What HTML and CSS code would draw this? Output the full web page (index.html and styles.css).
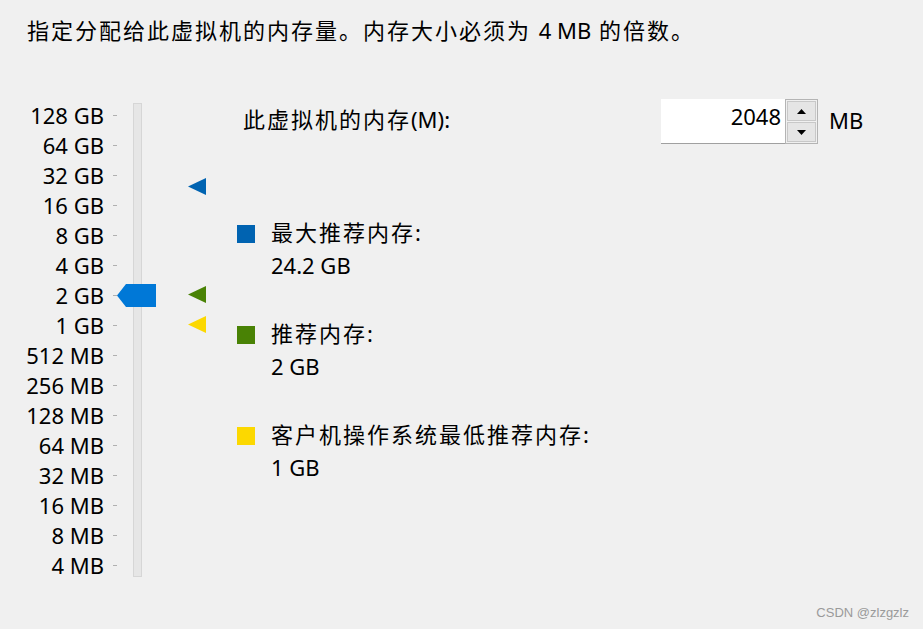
FILE: index.html
```html
<!DOCTYPE html>
<html lang="zh-CN">
<head>
<meta charset="utf-8">
<link rel="stylesheet" href="styles.css">
</head>
<body>
<div class="page">
  <p class="intro cj">指定分配给此虚拟机的内存量。内存大小必须为 <span class="lat">4 MB</span> 的倍数。</p>
  <div class="main">
    <div class="scale">
      <ul class="labels">
        <li>128 GB</li><li>64 GB</li><li>32 GB</li><li>16 GB</li><li>8 GB</li><li>4 GB</li><li>2 GB</li><li>1 GB</li>
        <li>512 MB</li><li>256 MB</li><li>128 MB</li><li>64 MB</li><li>32 MB</li><li>16 MB</li><li>8 MB</li><li>4 MB</li>
      </ul>
      <div class="slider">
        <div class="track"></div>
        <svg class="thumb" width="39" height="23" viewBox="0 0 39 23"><polygon points="0,11.5 9,0 39,0 39,23 9,23" fill="#0078d7"/></svg>
      </div>
      <div class="markers">
        <svg class="mark mark-max" width="18" height="17" viewBox="0 0 18 17"><polygon points="0,8.5 18,0 18,17" fill="#0063b1"/></svg>
        <svg class="mark mark-rec" width="18" height="17" viewBox="0 0 18 17"><polygon points="0,8.5 18,0 18,17" fill="#498205"/></svg>
        <svg class="mark mark-min" width="18" height="17" viewBox="0 0 18 17"><polygon points="0,8.5 18,0 18,17" fill="#fcd800"/></svg>
      </div>
    </div>
    <div class="info">
      <div class="mem-row">
        <span class="mem-label cj">此虚拟机的内存<span class="lat">(M):</span></span>
        <div class="spin">
          <div class="spin-value">2048</div>
          <div class="spin-btns">
            <div class="spin-btn"><svg width="9" height="5" viewBox="0 0 9 5"><polygon points="0,5 4.5,0 9,5" fill="#000"/></svg></div>
            <div class="spin-btn"><svg width="9" height="5" viewBox="0 0 9 5"><polygon points="0,0 9,0 4.5,5" fill="#000"/></svg></div>
          </div>
        </div>
        <span class="unit">MB</span>
      </div>
      <div class="legend">
        <div class="item">
          <span class="swatch blue"></span>
          <div class="item-text"><div class="cj">最大推荐内存<span class="lat">:</span></div><div>24.2 GB</div></div>
        </div>
        <div class="item">
          <span class="swatch green"></span>
          <div class="item-text"><div class="cj">推荐内存<span class="lat">:</span></div><div>2 GB</div></div>
        </div>
        <div class="item">
          <span class="swatch yellow"></span>
          <div class="item-text"><div class="cj">客户机操作系统最低推荐内存<span class="lat">:</span></div><div>1 GB</div></div>
        </div>
      </div>
    </div>
  </div>
  <div class="watermark">CSDN @zlzgzlz</div>
</div>
</body>
</html>
```
FILE: styles.css
```css
html, body {
  margin: 0;
  padding: 0;
  background: #f0f0f0;
}
.page {
  width: 923px;
  height: 629px;
  position: relative;
  font-family: "Noto Sans", "Noto Sans CJK SC", sans-serif;
  font-size: 22px;
  color: #000;
  overflow: hidden;
}
.cj {
  letter-spacing: 2px;
}
.lat {
  letter-spacing: 0;
}
.intro {
  margin: 0;
  padding: 17px 0 0 27px;
  line-height: 26px;
  white-space: nowrap;
}
.main {
  display: flex;
  margin-top: 57px;
}
.scale {
  display: flex;
  width: 236px;
  flex: none;
}
.labels {
  list-style: none;
  margin: 0;
  padding: 0;
  width: 117px;
}
.labels li {
  height: 30px;
  line-height: 30px;
  text-align: right;
  padding-right: 13px;
  position: relative;
}
.labels li::after {
  content: "";
  position: absolute;
  right: 0;
  top: 15px;
  width: 4px;
  height: 1px;
  background: #b0b0b0;
}
.slider {
  position: relative;
  width: 39px;
}
.track {
  margin: 3px 0 0 16px;
  width: 7px;
  height: 472px;
  background: #e6e6e6;
  border: 1px solid #d6d6d6;
}
.thumb {
  position: absolute;
  left: 0;
  top: 184px;
}
.markers {
  position: relative;
  margin-left: 32px;
  width: 18px;
}
.mark { position: absolute; left: 0; }
.mark-max { top: 78px; }
.mark-rec { top: 186px; }
.mark-min { top: 216px; }
.info {
  flex: 1;
  padding-left: 7px;
}
.mem-row {
  display: flex;
  align-items: center;
  height: 45px;
  margin-top: -1px;
}
.mem-label {
  width: 418px;
  white-space: nowrap;
  line-height: 30px;
  margin-top: -6px;
}
.spin {
  display: flex;
  height: 45px;
}
.spin-value {
  width: 124px;
  background: #fff;
  border-bottom: 1px solid #a0a0a0;
  box-sizing: border-box;
  text-align: right;
  padding: 2px 4px 0 0;
  line-height: 30px;
}
.spin-btns {
  display: flex;
  flex-direction: column;
  border: 1px solid #b4b4b4;
  width: 33px;
  box-sizing: border-box;
  padding: 1px;
  gap: 1px;
  background: #f0f0f0;
}
.spin-btn {
  flex: 1;
  display: flex;
  align-items: center;
  justify-content: center;
  background: #e5e5e5;
  border: 1px solid #c8c8c8;
}
.unit {
  margin-left: 11px;
  line-height: 30px;
  margin-top: -3px;
}
.legend {
  margin: 75px 0 0 -6px;
  display: flex;
  flex-direction: column;
  gap: 39px;
}
.item {
  display: flex;
  align-items: flex-start;
}
.swatch {
  width: 18px;
  height: 18px;
  margin: 6px 16px 0 0;
  flex: none;
}
.swatch.blue { background: #0063b1; }
.swatch.green { background: #498205; }
.swatch.yellow { background: #fcd800; }
.item-text div {
  line-height: 31px;
  height: 31px;
  white-space: nowrap;
}
.item-text .cj {
  margin-top: -2px;
  margin-bottom: 2px;
}
.watermark {
  position: absolute;
  right: 14px;
  bottom: 9px;
  font-family: "Liberation Sans", sans-serif;
  font-size: 13px;
  color: #9a9a9a;
}
```
